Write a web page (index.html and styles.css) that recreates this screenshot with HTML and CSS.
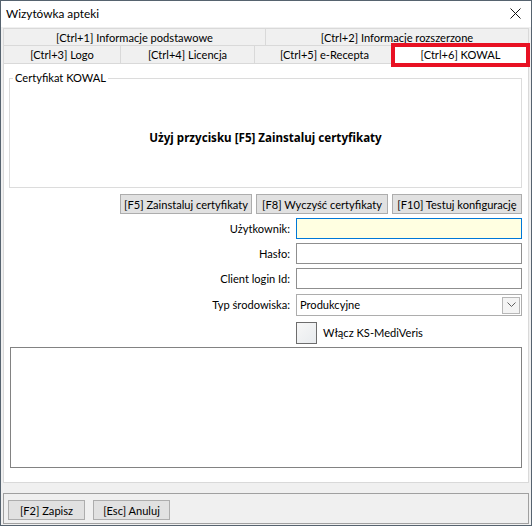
FILE: index.html
```html
<!DOCTYPE html>
<html lang="pl">
<head>
<meta charset="utf-8">
<title>Wizytówka apteki</title>
<link rel="stylesheet" href="styles.css">
</head>
<body>
<div class="window">
  <div class="titlebar">
    <span class="title">Wizytówka apteki</span>
    <svg class="close" width="11" height="11" viewBox="0 0 11 11"><path d="M0.5 0.5 L10.5 10.5 M10.5 0.5 L0.5 10.5" stroke="#111" stroke-width="1" fill="none"/></svg>
  </div>
  <div class="client">
    <div class="tabs">
      <div class="tabrow row1">
        <div class="tab half">[Ctrl+1] Informacje podstawowe</div>
        <div class="tab half">[Ctrl+2] Informacje rozszerzone</div>
      </div>
      <div class="tabrow row2">
        <div class="tab t3">[Ctrl+3] Logo</div>
        <div class="tab t4">[Ctrl+4] Licencja</div>
        <div class="tab t5">[Ctrl+5] e-Recepta</div>
        <div class="tab t6 active">[Ctrl+6] KOWAL</div>
      </div>
    </div>
    <div class="panel">
      <fieldset class="group">
        <legend>Certyfikat KOWAL</legend>
        <div class="message">Użyj przycisku [F5] Zainstaluj certyfikaty</div>
      </fieldset>
      <div class="actions">
        <button class="btn b1">[F5] Zainstaluj certyfikaty</button>
        <button class="btn b2">[F8] Wyczyść certyfikaty</button>
        <button class="btn b3">[F10] Testuj konfigurację</button>
      </div>
      <div class="form">
        <label class="lbl">Użytkownik:</label>
        <div class="input focused"></div>
        <label class="lbl">Hasło:</label>
        <div class="input"></div>
        <label class="lbl">Client login Id:</label>
        <div class="input"></div>
        <label class="lbl">Typ środowiska:</label>
        <div class="input select">
          <span class="value">Produkcyjne</span>
          <span class="drop"><svg width="9" height="6" viewBox="0 0 9 6"><path d="M0.5 0.5 L4.5 4.5 L8.5 0.5" stroke="#606060" stroke-width="1" fill="none"/></svg></span>
        </div>
        <span class="lbl"></span>
        <div class="check-row">
          <span class="checkbox"></span>
          <span class="check-label">Włącz KS-MediVeris</span>
        </div>
      </div>
      <div class="memo"></div>
    </div>
    <div class="footer">
      <button class="btn fbtn">[F2] Zapisz</button>
      <button class="btn fbtn">[Esc] Anuluj</button>
    </div>
  </div>
</div>
</body>
</html>
```

FILE: styles.css
```css
* { box-sizing: border-box; }
html, body { margin: 0; padding: 0; }
body {
  width: 532px;
  height: 526px;
  font-family: "Lato", "Noto Sans", sans-serif;
  font-size: 11.1px;
  color: #000;
  background: #f0f0f0;
}
.window {
  width: 532px;
  height: 526px;
  border: 1px solid #56636f;
  background: #f0f0f0;
  display: flex;
  flex-direction: column;
}
.titlebar {
  height: 26px;
  background: #fff;
  display: flex;
  align-items: center;
  justify-content: space-between;
  padding: 0 10px 0 5px;
  flex: none;
}
.title { font-size: 11.8px; line-height: 26px; }
.close { display: block; margin-top: -2px; }
.client {
  flex: 1;
  display: flex;
  flex-direction: column;
  padding: 1px 2px 1px 2px;
}
.tabs { flex: none; }
.tabrow { display: flex; }
.row1 { height: 17px; }
.row2 { height: 18px; }
.tab {
  border: 1px solid #d9d9d9;
  border-bottom: none;
  background: #f0f0f0;
  text-align: center;
  white-space: nowrap;
  line-height: 17px;
  margin-right: -1px;
}
.half { width: 263px; }
.row1 .tab:last-child { width: 264px; }
.t3 { width: 118px; }
.t4 { width: 135px; }
.t5 { width: 141px; }
.t6 { width: 133px; }
.row2 .tab { line-height: 18px; }
.tab.active {
  position: relative;
  top: 1px;
  background: #fff;
  outline: 4px solid #e81123;
  outline-offset: -1px;
  z-index: 2;
  line-height: 16px;
}
.panel {
  height: 420px;
  background: #fff;
  border: 1px solid #d9d9d9;
  padding: 7px 6px 0 5px;
  flex: none;
}
.group {
  margin: 0;
  border: 1px solid #dcdcdc;
  padding: 0;
  height: 117px;
  display: flex;
  align-items: center;
  justify-content: center;
}
.group legend {
  margin-left: 3px;
  padding: 0 2px 0 2px;
  line-height: 14px;
}
.message {
  width: 100%;
  text-align: center;
  font-family: "Noto Sans", "Lato", sans-serif;
  font-size: 11.6px;
  font-weight: bold;
  margin-top: 2px;
}
.actions {
  display: flex;
  justify-content: flex-end;
  gap: 4px;
  margin-top: 6px;
}
.btn {
  font-family: inherit;
  font-size: 11.1px;
  color: #000;
  background: #e1e1e1;
  border: 1px solid #adadad;
  height: 20px;
  padding: 0;
  line-height: 17px;
  white-space: nowrap;
}
.b1 { width: 132px; }
.b2 { width: 132px; }
.b3 { width: 130px; }
.form {
  display: grid;
  grid-template-columns: 1fr 226px;
  column-gap: 6px;
  row-gap: 4px;
  margin-top: 4px;
  align-items: center;
}
.lbl { text-align: right; line-height: 21px; }
.input {
  height: 21px;
  border: 1px solid #8f8f8f;
  background: #fff;
}
.input.focused {
  border-color: #0078d7;
  background: #ffffe1;
}
.select {
  display: flex;
  align-items: center;
  justify-content: space-between;
  padding: 0 1px 0 3px;
  height: 22px;
  border-color: #adadad;
  margin-top: 1px;
}
.select .value { line-height: 20px; }
.drop {
  width: 18px;
  height: 17px;
  border: 1px solid #b7b7b7;
  background: #f4f4f4;
  display: flex;
  align-items: center;
  justify-content: center;
}
.drop svg { display: block; }
.check-row {
  display: flex;
  align-items: center;
  gap: 6px;
  height: 23px;
  margin-top: 1px;
}
.checkbox {
  width: 21px;
  height: 22px;
  border: 1px solid #6d6d6d;
  background: linear-gradient(135deg, #f7f7f7 0%, #e8ebee 100%);
  display: block;
}
.memo {
  margin: 3px 0 0 1px;
  height: 121px;
  border: 1px solid #828282;
  background: #fff;
}
.footer {
  margin-top: 10px;
  flex: 1;
  border: 1px solid #a0a0a0;
  display: flex;
  align-items: flex-start;
  gap: 8px;
  padding: 6px 0 0 4px;
}
.fbtn { width: 77px; }
```
